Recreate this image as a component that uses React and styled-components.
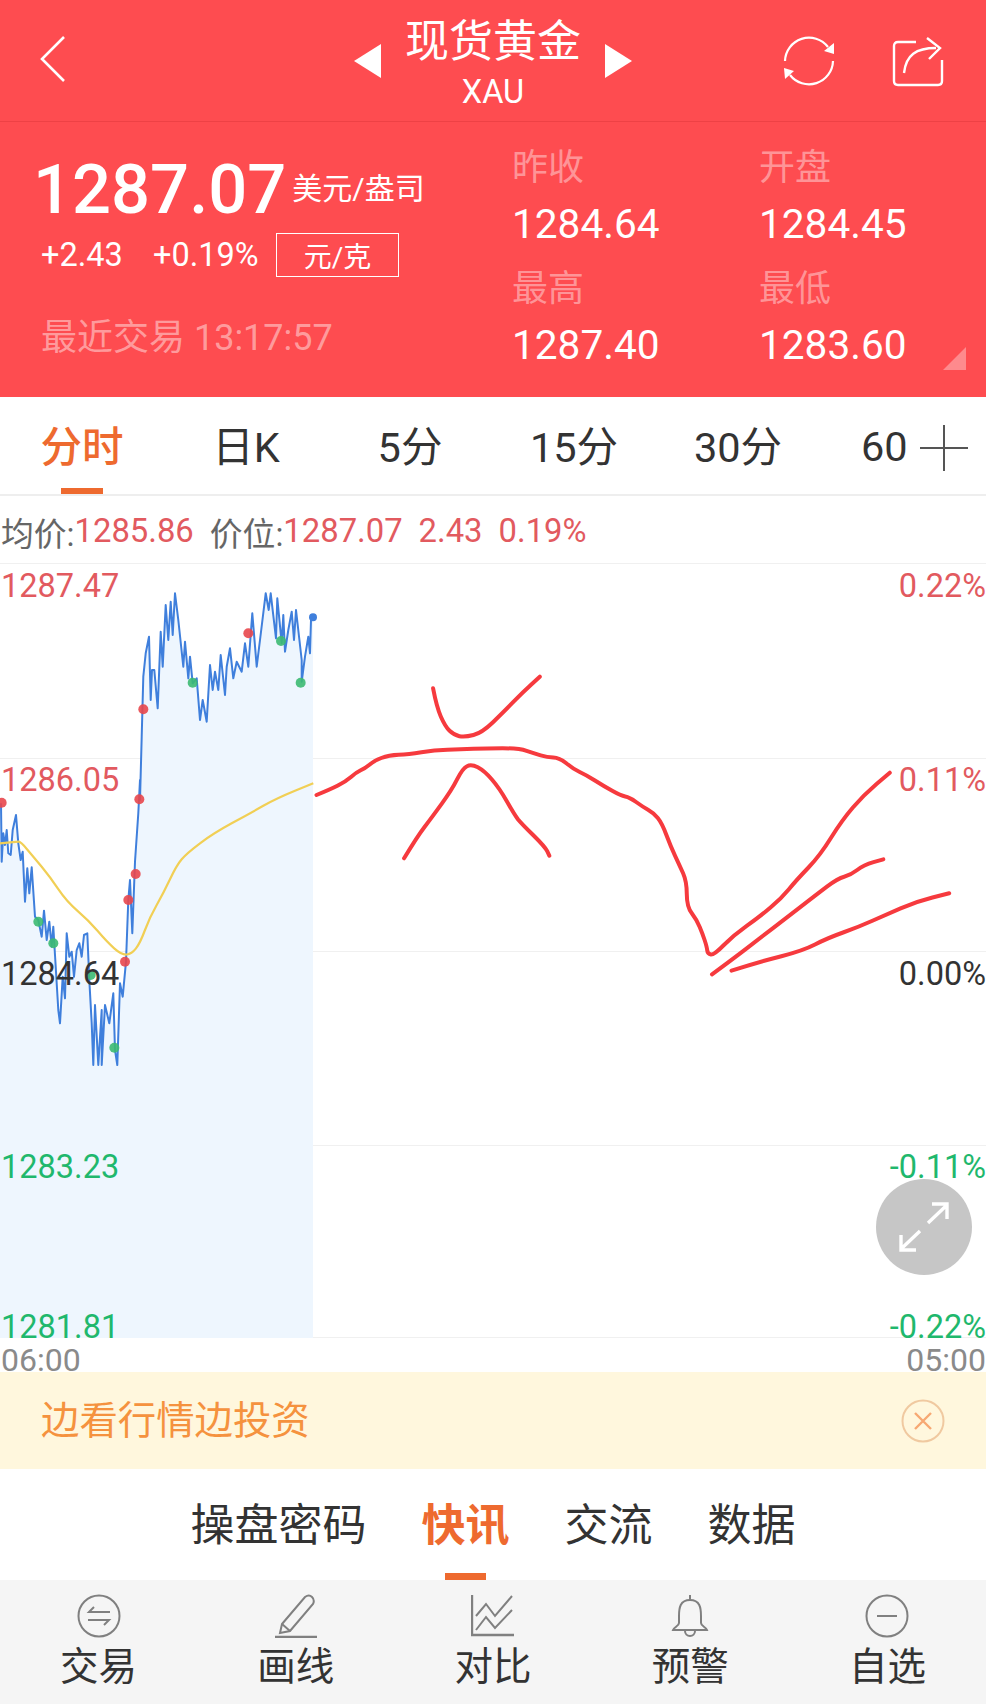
import styled, { createGlobalStyle } from 'styled-components';

const GlobalStyle = createGlobalStyle`
  html, body {
    margin: 0;
    padding: 0;
    background: #fff;
  }

  body {
    font-family: Roboto, "Noto Sans CJK SC", sans-serif;
  }
`;

const RED = '#fe4c50';
const ORANGE = '#ee6a2f';
const UP = '#e25a5f';
const DOWN = '#1fb86d';

const Page = styled.div`
  width: 986px;
  height: 1704px;
  overflow: hidden;
  display: flex;
  flex-direction: column;
`;

const TopBar = styled.header`
  height: 121px;
  background: ${RED};
  border-bottom: 1px solid #ee4145;
  display: grid;
  grid-template-columns: 1fr auto 1fr;
  align-items: center;
  padding: 0 42px 0 40px;
  color: #fff;
`;

const BackButton = styled.div`
  display: flex;
  align-items: center;
  height: 100%;
  padding-bottom: 3px;
  margin-left: -2px;
`;

const TitleGroup = styled.div`
  display: flex;
  align-items: center;
  gap: 24px;
  margin-left: 2px;
`;

const TitleText = styled.div`
  text-align: center;
`;

const Title = styled.div`
  font-size: 44px;
  line-height: 60px;
  margin-top: 3px;
`;

const Symbol = styled.div`
  font-size: 32.5px;
  line-height: 40px;
`;

const TopActions = styled.div`
  display: flex;
  justify-content: flex-end;
  align-items: center;
  gap: 56px;
`;

const QuotePanel = styled.section`
  position: relative;
  height: 275px;
  background: ${RED};
  color: #fff;
  display: grid;
  grid-template-columns: 512px 1fr;
`;

const QuoteLeft = styled.div`
  padding: 30px 0 0 33px;
`;

const PriceRow = styled.div`
  display: flex;
  align-items: center;
  height: 76px;
  gap: 6px;
`;

const Price = styled.div`
  font-size: 68.7px;
  font-weight: 500;
  line-height: 76px;
`;

const Unit = styled.div`
  font-size: 30px;
  line-height: 40px;
  margin-bottom: 2px;
`;

const ChangeRow = styled.div`
  display: flex;
  align-items: center;
  height: 44px;
  margin: 5px 0 0 8px;
  font-size: 32.5px;
`;

const Change = styled.span`
  width: 112px;
`;

const ChangePct = styled.span`
  width: 123px;
`;

const UnitButton = styled.div`
  width: 121px;
  height: 42px;
  border: 1px solid #fff;
  display: flex;
  align-items: center;
  justify-content: center;
  font-size: 28px;
`;

const LastTrade = styled.div`
  margin: 39px 0 0 8px;
  font-size: 36px;
  line-height: 44px;
  color: rgba(255, 255, 255, 0.45);
  white-space: nowrap;
`;

const StatsGrid = styled.div`
  display: grid;
  grid-template-columns: 247px 1fr;
  grid-auto-rows: 121px;
  padding-top: 24px;
`;

const Stat = styled.div`
  display: flex;
  flex-direction: column;
`;

const StatLabel = styled.div`
  font-size: 36px;
  line-height: 44px;
  color: rgba(255, 255, 255, 0.42);
`;

const StatValue = styled.div`
  font-size: 40.6px;
  line-height: 48px;
  margin-top: 10px;
`;

const CornerMark = styled.div`
  position: absolute;
  right: 20px;
  bottom: 27px;
  width: 0;
  height: 0;
  border-style: solid;
  border-width: 0 0 23px 23px;
  border-color: transparent transparent rgba(255, 255, 255, 0.35) transparent;
`;

const PeriodTabs = styled.nav`
  position: relative;
  height: 97px;
  border-bottom: 2px solid #eeeeee;
  display: grid;
  grid-template-columns: repeat(5, 164px) 1fr;
  background: #fff;
`;

const PeriodTab = styled.div`
  position: relative;
  display: flex;
  align-items: center;
  justify-content: ${(p) => (p.$left ? 'flex-start' : 'center')};
  padding-left: ${(p) => (p.$left ? '41px' : '0')};
  padding-top: ${(p) => (p.$left ? '2px' : '0')};
  padding-bottom: ${(p) => (p.$left ? '0' : '4px')};
  font-size: 41.5px;
  color: ${(p) => (p.$active ? ORANGE : '#333')};
  font-weight: ${(p) => (p.$active ? 500 : 400)};

  ${(p) =>
    p.$active &&
    `
    &::after {
      content: '';
      position: absolute;
      left: 61px;
      bottom: 0;
      width: 42px;
      height: 6px;
      background: ${ORANGE};
    }
  `}
`;

const PlusButton = styled.div`
  position: absolute;
  right: 18px;
  top: 28px;
  width: 48px;
  height: 46px;
  background: #fff;

  &::before,
  &::after {
    content: '';
    position: absolute;
    background: #555;
  }

  &::before {
    left: 0;
    right: 0;
    top: 22px;
    height: 2px;
  }

  &::after {
    top: 0;
    bottom: 0;
    left: 23px;
    width: 2px;
  }
`;

const InfoRow = styled.div`
  box-sizing: border-box;
  height: 67px;
  display: flex;
  align-items: center;
  padding: 3px 0 0 1px;
  font-size: 32.8px;
  color: #666;
  white-space: nowrap;
`;

const InfoValue = styled.span`
  color: ${UP};
  margin-right: 16px;
`;

const ChartArea = styled.div`
  position: relative;
  height: 775px;
`;

const ChartSvg = styled.svg`
  display: block;
`;

const AxisLabel = styled.div`
  position: absolute;
  top: ${(p) => p.$top}px;
  ${(p) => (p.$right ? 'right: 0;' : 'left: 1px;')}
  font-size: 32.5px;
  line-height: 36px;
  color: ${(p) => p.$color};
`;

const ExpandButton = styled.div`
  position: absolute;
  left: 876px;
  top: 616px;
  width: 96px;
  height: 96px;
  border-radius: 50%;
  background: #c6c6c6;
  display: flex;
  align-items: center;
  justify-content: center;
`;

const TimeRow = styled.div`
  box-sizing: border-box;
  height: 34px;
  display: flex;
  justify-content: space-between;
  padding: 6px 0 0 1px;
  font-size: 32px;
  line-height: 32px;
  color: #8a8a8a;
`;

const Banner = styled.div`
  box-sizing: border-box;
  height: 97px;
  background: #fff7dd;
  display: flex;
  align-items: center;
  justify-content: space-between;
  padding: 0 41px;
  font-size: 38.4px;
  color: #f5923e;
`;

const BannerText = styled.span`
  margin-top: -7px;
`;

const ContentTabs = styled.nav`
  height: 111px;
  display: flex;
  justify-content: center;
  gap: 55px;
  background: #fff;
`;

const ContentTab = styled.div`
  position: relative;
  display: flex;
  align-items: center;
  padding-bottom: 6px;
  font-size: 44px;
  color: ${(p) => (p.$active ? ORANGE : '#333')};
  font-weight: ${(p) => (p.$active ? 700 : 400)};

  ${(p) =>
    p.$active &&
    `
    &::after {
      content: '';
      position: absolute;
      left: 23px;
      bottom: 0;
      width: 41px;
      height: 7px;
      background: ${ORANGE};
    }
  `}
`;

const BottomNav = styled.footer`
  height: 124px;
  display: grid;
  grid-template-columns: repeat(5, 1fr);
  background: #f5f5f5;
`;

const NavItem = styled.div`
  display: flex;
  flex-direction: column;
  align-items: center;
  padding-top: 14px;
  font-size: 38.5px;
  color: #333;
`;

const NavLabel = styled.div`
  line-height: 50px;
  margin-top: 4px;
`;

const toChart = (pts, ox, oy, sx, sy) => pts.map(([x, y]) => [ox + x / sx, oy + y / sy - 563]);
const linePath = (pts) => pts.map(([x, y], i) => `${i ? 'L' : 'M'}${x.toFixed(1)} ${y.toFixed(1)}`).join(' ');

// quadratic smoothing through the midpoints, for the finger drawn strokes
const smoothPath = (pts) => {
  let d = `M${pts[0][0].toFixed(1)} ${pts[0][1].toFixed(1)}`;
  for (let i = 1; i < pts.length - 1; i++) {
    const mx = (pts[i][0] + pts[i + 1][0]) / 2;
    const my = (pts[i][1] + pts[i + 1][1]) / 2;
    d += ` Q${pts[i][0].toFixed(1)} ${pts[i][1].toFixed(1)} ${mx.toFixed(1)} ${my.toFixed(1)}`;
  }
  const last = pts[pts.length - 1];
  return `${d} L${last[0].toFixed(1)} ${last[1].toFixed(1)}`;
};

const lowerPrice = toChart(
  [
    [3, 70], [5, 245], [10, 160], [15, 195], [20, 150], [25, 220], [32, 225], [38, 150], [48, 105], [55, 190],
    [62, 240], [68, 215], [75, 365], [82, 265], [88, 340], [95, 262], [105, 410], [115, 420], [125, 470],
    [132, 392], [140, 480], [148, 425], [155, 500], [160, 440], [165, 525], [175, 690], [180, 730], [188, 590],
    [195, 655], [200, 460], [208, 530], [215, 515], [222, 590], [230, 510], [238, 490], [245, 530], [252, 465],
    [262, 460], [268, 600], [275, 730], [280, 855], [285, 675], [295, 855], [305, 690], [305, 855], [315, 675],
    [328, 730], [340, 640], [345, 810], [352, 855], [360, 610], [368, 650], [378, 545], [385, 360], [390, 300],
    [397, 460], [405, 245], [415, 100], [420, 0],
  ],
  0, 780, 3, 3,
);

const upperPrice = toChart(
  [
    [420, 720], [425, 530], [430, 350], [437, 280], [447, 230], [452, 420], [456, 330], [463, 330], [473, 445],
    [482, 215], [488, 320], [497, 135], [505, 240], [512, 125], [518, 225], [525, 100], [535, 180], [550, 320],
    [555, 245], [565, 355], [570, 290], [578, 370], [590, 355], [600, 480], [608, 420], [620, 485], [630, 315],
    [638, 390], [645, 335], [655, 390], [662, 285], [675, 405], [680, 320], [690, 265], [700, 355], [710, 305],
    [725, 335], [735, 250], [745, 320], [757, 160], [770, 320], [780, 240], [797, 100], [806, 150], [812, 100],
    [828, 235], [832, 115], [845, 250], [850, 165], [855, 275], [865, 210], [875, 155], [882, 240], [888, 150],
    [905, 300], [905, 365], [915, 290], [925, 230], [930, 280], [933, 180], [939, 172],
  ],
  0, 560, 3, 3,
);

const pricePoints = [...lowerPrice, ...upperPrice];

const avgPoints = toChart(
  [
    [0, 190], [50, 185], [62, 185], [100, 230], [150, 290], [200, 365], [265, 420], [320, 485], [365, 525],
    [395, 522], [420, 490], [450, 410], [490, 340], [530, 255], [560, 220], [640, 160], [750, 100], [830, 55],
    [940, 10],
  ],
  0, 780, 3, 3,
);

const drawnStrokes = [
  [
    [38, 405], [70, 388], [105, 365], [130, 337], [150, 325], [170, 303], [205, 285], [250, 283], [310, 270],
    [370, 268], [430, 265], [505, 265], [540, 280], [570, 292], [598, 293], [630, 327], [660, 345], [700, 378],
    [740, 407], [760, 412], [790, 440], [815, 458], [835, 490], [855, 560], [875, 615], [892, 665], [892, 740],
    [915, 780], [928, 820], [938, 860], [940, 882], [955, 885], [1000, 825], [1060, 770], [1110, 715],
    [1145, 660], [1200, 585], [1250, 480], [1300, 405], [1360, 338],
  ],
  [
    [950, 943], [1000, 895], [1060, 835], [1120, 775], [1190, 705], [1240, 655], [1270, 645], [1300, 615],
    [1345, 598],
  ],
  [
    [995, 932], [1060, 905], [1160, 872], [1215, 835], [1290, 800], [1350, 765], [1420, 725], [1497, 700],
  ],
  [
    [307, 85], [315, 140], [335, 200], [355, 225], [380, 232], [420, 218], [470, 155], [515, 95], [553, 50],
  ],
  [
    [240, 595], [270, 530], [305, 470], [350, 390], [375, 325], [395, 312], [425, 332], [460, 385], [495, 465],
    [510, 490], [565, 560], [575, 587],
  ],
].map((s) => toChart(s, 300, 660, 2.306, 3));

const redDots = [
  ...toChart([[430, 448], [418, 718], [745, 220]], 0, 560, 3, 3),
  ...toChart([[5, 68], [407, 282], [385, 360], [375, 545]], 0, 780, 3, 3),
];
const greenDots = [
  ...toChart([[578, 368], [843, 243], [902, 368]], 0, 560, 3, 3),
  ...toChart([[115, 425], [160, 490], [343, 803], [272, 585]], 0, 780, 3, 3),
];

const gridLines = [0, 195, 388, 582, 774];

const leftLabels = [
  { text: '1287.47', top: 5, color: UP },
  { text: '1286.05', top: 199, color: UP },
  { text: '1284.64', top: 393, color: '#333' },
  { text: '1283.23', top: 586, color: DOWN },
  { text: '1281.81', top: 746, color: DOWN },
];

const rightLabels = [
  { text: '0.22%', top: 5, color: UP },
  { text: '0.11%', top: 199, color: UP },
  { text: '0.00%', top: 393, color: '#333' },
  { text: '-0.11%', top: 586, color: DOWN },
  { text: '-0.22%', top: 746, color: DOWN },
];

const stats = [
  ['昨收', '1284.64'],
  ['开盘', '1284.45'],
  ['最高', '1287.40'],
  ['最低', '1283.60'],
];

function PriceChart() {
  const line = linePath(pricePoints);
  const first = pricePoints[0];
  const last = pricePoints[pricePoints.length - 1];
  const area = `M0 775 L0 ${first[1].toFixed(1)} ${line.replace(/^M/, 'L')} L${last[0].toFixed(1)} 775 Z`;
  return (
    <ChartSvg width="986" height="775" viewBox="0 0 986 775">
      {gridLines.map((y) => (
        <line key={y} x1="0" x2="986" y1={y + 0.5} y2={y + 0.5} stroke="#f0f0f0" strokeWidth="1" />
      ))}
      <path d={area} fill="#eef6fe" />
      <path d={line} fill="none" stroke="#3f7fdc" strokeWidth="2" strokeLinejoin="round" />
      <path d={smoothPath(avgPoints)} fill="none" stroke="#f1cf55" strokeWidth="2.2" />
      {redDots.map(([x, y]) => (
        <circle key={`${x}-${y}`} cx={x} cy={y} r="5" fill="#e8474c" fillOpacity="0.9" />
      ))}
      {greenDots.map(([x, y]) => (
        <circle key={`${x}-${y}`} cx={x} cy={y} r="5" fill="#3cba72" fillOpacity="0.9" />
      ))}
      <circle cx={last[0]} cy={last[1]} r="4" fill="#3f7fdc" />
      {drawnStrokes.map((s, i) => (
        <path
          key={i}
          d={smoothPath(s)}
          fill="none"
          stroke="#f63a3e"
          strokeWidth="4"
          strokeLinecap="round"
          strokeLinejoin="round"
        />
      ))}
    </ChartSvg>
  );
}

function App() {
  return (
    <Page>
      <GlobalStyle />
      <TopBar>
        <BackButton>
          <svg width="30" height="50" viewBox="0 0 30 50">
            <path d="M26 3 L4 25 L26 47" fill="none" stroke="#fff" strokeWidth="2.6" />
          </svg>
        </BackButton>
        <TitleGroup>
          <svg width="27" height="34" viewBox="0 0 27 34">
            <path d="M27 0 V34 L0 17 Z" fill="#fff" />
          </svg>
          <TitleText>
            <Title>现货黄金</Title>
            <Symbol>XAU</Symbol>
          </TitleText>
          <svg width="27" height="34" viewBox="0 0 27 34">
            <path d="M0 0 V34 L27 17 Z" fill="#fff" />
          </svg>
        </TitleGroup>
        <TopActions>
          <svg width="54" height="56" viewBox="0 0 54 56" fill="none" stroke="#fff" strokeWidth="2.2">
            <path d="M3 28 A24 24 0 0 1 46 14" />
            <path d="M51 28 A24 24 0 0 1 8 42" />
            <path d="M52 10 V21 L42 18 Z" fill="#fff" stroke="none" />
            <path d="M2 35 L12 38 L3 46 Z" fill="#fff" stroke="none" />
          </svg>
          <svg width="52" height="52" viewBox="0 0 52 52" fill="none" stroke="#fff" strokeWidth="2.4">
            <path d="M24 7 H6 Q2 7 2 11 V46 Q2 50 6 50 H46 Q50 50 50 46 V25" />
            <path d="M12 38 C14 20 24 13 44 13" />
            <path d="M35 3 L48 13 L37 24" />
          </svg>
        </TopActions>
      </TopBar>

      <QuotePanel>
        <QuoteLeft>
          <PriceRow>
            <Price>1287.07</Price>
            <Unit>美元/盎司</Unit>
          </PriceRow>
          <ChangeRow>
            <Change>+2.43</Change>
            <ChangePct>+0.19%</ChangePct>
            <UnitButton>元/克</UnitButton>
          </ChangeRow>
          <LastTrade>最近交易 13:17:57</LastTrade>
        </QuoteLeft>
        <StatsGrid>
          {stats.map(([label, value]) => (
            <Stat key={label}>
              <StatLabel>{label}</StatLabel>
              <StatValue>{value}</StatValue>
            </Stat>
          ))}
        </StatsGrid>
        <CornerMark />
      </QuotePanel>

      <PeriodTabs>
        <PeriodTab $active>分时</PeriodTab>
        <PeriodTab>日K</PeriodTab>
        <PeriodTab>5分</PeriodTab>
        <PeriodTab>15分</PeriodTab>
        <PeriodTab>30分</PeriodTab>
        <PeriodTab $left>60</PeriodTab>
        <PlusButton />
      </PeriodTabs>

      <InfoRow>
        均价:<InfoValue>1285.86</InfoValue>
        价位:<InfoValue>1287.07</InfoValue>
        <InfoValue>2.43</InfoValue>
        <InfoValue>0.19%</InfoValue>
      </InfoRow>

      <ChartArea>
        <PriceChart />
        {leftLabels.map((l) => (
          <AxisLabel key={l.text} $top={l.top} $color={l.color}>
            {l.text}
          </AxisLabel>
        ))}
        {rightLabels.map((l) => (
          <AxisLabel key={l.text} $right $top={l.top} $color={l.color}>
            {l.text}
          </AxisLabel>
        ))}
        <ExpandButton>
          <svg width="54" height="54" viewBox="0 0 54 54" fill="none" stroke="#fff" strokeWidth="3.4">
            <path d="M31 23 L50 5 M35 4 H50 V19" />
            <path d="M23 31 L4 49 M19 50 H4 V35" />
          </svg>
        </ExpandButton>
      </ChartArea>

      <TimeRow>
        <span>06:00</span>
        <span>05:00</span>
      </TimeRow>

      <Banner>
        <BannerText>边看行情边投资</BannerText>
        <svg width="44" height="44" viewBox="0 0 44 44" fill="none">
          <circle cx="22" cy="22" r="20.5" stroke="#f0c9a0" strokeWidth="2" />
          <path d="M14 14 L30 30 M30 14 L14 30" stroke="#f7a873" strokeWidth="2.4" />
        </svg>
      </Banner>

      <ContentTabs>
        <ContentTab>操盘密码</ContentTab>
        <ContentTab $active>快讯</ContentTab>
        <ContentTab>交流</ContentTab>
        <ContentTab>数据</ContentTab>
      </ContentTabs>

      <BottomNav>
        <NavItem>
          <svg width="44" height="44" viewBox="0 0 44 44" fill="none" stroke="#808080" strokeWidth="2">
            <circle cx="22" cy="22" r="20.5" />
            <path d="M33 18 H12 L17 13" />
            <path d="M11 26 H32 L27 31" />
          </svg>
          <NavLabel>交易</NavLabel>
        </NavItem>
        <NavItem>
          <svg width="44" height="44" viewBox="0 0 44 44" fill="none" stroke="#808080" strokeWidth="2">
            <path d="M8 30 L31 3 Q35 0 38 3 Q41 6 39 10 L16 37 L6 39 Z" />
            <path d="M8 30 L16 37" />
            <path d="M1 43 H43" strokeWidth="2.6" />
          </svg>
          <NavLabel>画线</NavLabel>
        </NavItem>
        <NavItem>
          <svg width="44" height="44" viewBox="0 0 44 44" fill="none" stroke="#808080" strokeWidth="2">
            <path d="M1 1 V41 H43" strokeWidth="2.4" />
            <path d="M5 22 L15 10 L24 22 L41 2" />
            <path d="M5 36 L15 23 L24 34 L41 16" />
          </svg>
          <NavLabel>对比</NavLabel>
        </NavItem>
        <NavItem>
          <svg width="44" height="44" viewBox="0 0 44 44" fill="none" stroke="#808080" strokeWidth="2">
            <path d="M22 6 C12 6 11 14 11 22 V29 C11 32 6 33 5 36 H39 C38 33 33 32 33 29 V22 C33 14 32 6 22 6 Z" />
            <path d="M22 6 V1" />
            <path d="M17 37 A5 5 0 0 0 27 37" />
          </svg>
          <NavLabel>预警</NavLabel>
        </NavItem>
        <NavItem>
          <svg width="44" height="44" viewBox="0 0 44 44" fill="none" stroke="#808080" strokeWidth="2">
            <circle cx="22" cy="22" r="20.5" />
            <path d="M12 22 H32" />
          </svg>
          <NavLabel>自选</NavLabel>
        </NavItem>
      </BottomNav>
    </Page>
  );
}

export default App;
